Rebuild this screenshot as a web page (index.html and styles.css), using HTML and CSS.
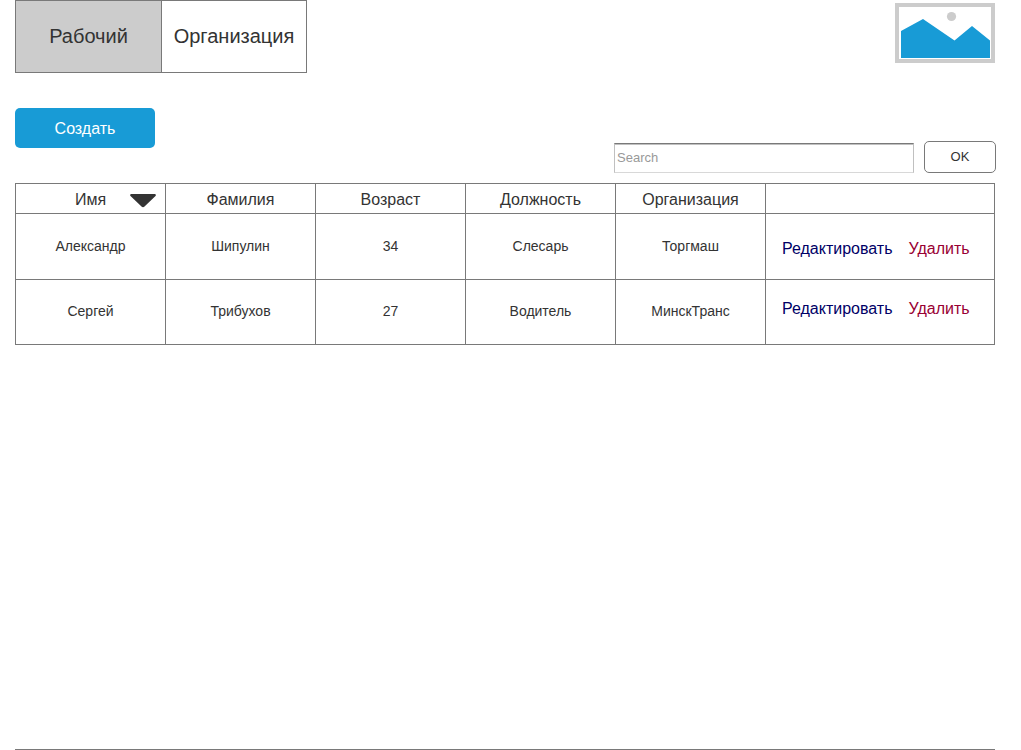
FILE: index.html
```html
<!DOCTYPE html>
<html lang="ru">
<head>
  <meta charset="utf-8">
  <meta name="viewport" content="width=device-width, initial-scale=1">
  <title>Рабочий</title>
  <link rel="stylesheet" href="styles.css">
</head>
<body class="page">
  <header class="header">
    <nav class="tabs">
      <a class="tab tab-active" href="#workers" aria-current="page">Рабочий</a>
      <a class="tab" href="#organizations">Организация</a>
    </nav>
    <svg class="logo" viewBox="0 0 100 60" role="img" aria-label="Логотип">
      <rect x="2" y="2" width="96" height="56" fill="#fff" stroke="#ccc" stroke-width="4"/>
      <circle cx="56.5" cy="13.5" r="4.6" fill="#ccc"/>
      <path d="M6 28 L28 16 L59.500 37.500 L77 23 L95 37.500 V55 H6 Z" fill="#189bd6"/>
    </svg>
  </header>

  <main class="content">
    <div class="toolbar">
      <button class="create" type="button">Создать</button>
      <form class="search" role="search">
        <input class="search-field" type="search" placeholder="Search" aria-label="Search">
        <button class="search-button" type="button">OK</button>
      </form>
    </div>

    <table class="grid">
      <colgroup>
        <col class="col-data"><col class="col-data"><col class="col-data"><col class="col-data"><col class="col-data"><col>
      </colgroup>
      <thead>
        <tr>
          <th class="sorted" scope="col" aria-sort="descending">Имя
            <svg class="sort-icon" viewBox="0 0 26 14" aria-hidden="true">
              <path d="M1 0 H25 Q26.500 0.500 25.500 2 L14.500 12.500 Q13 14 11.500 12.500 L0.500 2 Q-0.500 0.500 1 0 Z" fill="#333"/>
            </svg>
          </th>
          <th scope="col">Фамилия</th>
          <th scope="col">Возраст</th>
          <th scope="col">Должность</th>
          <th scope="col">Организация</th>
          <td></td>
        </tr>
      </thead>
      <tbody>
        <tr>
          <td>Александр</td>
          <td>Шипулин</td>
          <td>34</td>
          <td>Слесарь</td>
          <td>Торгмаш</td>
          <td>
            <div class="actions">
              <a class="edit" href="#edit-1">Редактировать</a>
              <a class="delete" href="#delete-1">Удалить</a>
            </div>
          </td>
        </tr>
        <tr class="last-row">
          <td>Сергей</td>
          <td>Трибухов</td>
          <td>27</td>
          <td>Водитель</td>
          <td>МинскТранс</td>
          <td>
            <div class="actions">
              <a class="edit" href="#edit-2">Редактировать</a>
              <a class="delete" href="#delete-2">Удалить</a>
            </div>
          </td>
        </tr>
      </tbody>
    </table>
  </main>

  <footer class="footer"></footer>
</body>
</html>
```

FILE: styles.css
```css
* {
  box-sizing: border-box;
}

.page {
  display: flex;
  flex-direction: column;
  min-height: 100vh;
  margin: 0;
  background: #fff;
  color: #333;
  font-family: "Liberation Sans", Arial, sans-serif;
  font-size: 14px;
}

.header {
  display: flex;
  justify-content: space-between;
  align-items: flex-start;
  padding: 0 26px 0 15px;
}

.tabs {
  display: flex;
  border: 1px solid #797979;
}

.tab {
  display: flex;
  align-items: center;
  justify-content: center;
  width: 144px;
  height: 71px;
  color: #333;
  font-size: 20px;
  text-decoration: none;
}

.tab-active {
  width: 146px;
  border-right: 1px solid #797979;
  background: #ccc;
}

.logo {
  width: 100px;
  height: 60px;
  margin-top: 3px;
}

.content {
  flex: 1;
  padding-top: 35px;
}

.toolbar {
  display: flex;
  justify-content: space-between;
  align-items: flex-start;
  padding: 0 25px 10px 15px;
}

.create {
  width: 140px;
  height: 40px;
  padding: 2px 0 0;
  border: 0;
  border-radius: 5px;
  background: #189bd6;
  color: #fff;
  font: inherit;
  font-size: 16px;
}

.search {
  display: flex;
  align-items: flex-end;
  gap: 10px;
  padding-top: 33px;
}

.search-field {
  width: 300px;
  height: 30px;
  padding: 0 2px 2px;
  border: 1px solid #c0c0c0;
  border-top-color: #797979;
  border-bottom-color: #d8d8d8;
  border-radius: 0;
  background: #fff;
  box-shadow: inset 0 1px #c0c0c0;
  color: #333;
  font: inherit;
  font-size: 13px;
  appearance: none;
}

.search-field::placeholder {
  color: #999;
}

.search-button {
  width: 72px;
  height: 32px;
  padding: 0 0 2px;
  border: 1px solid #797979;
  border-radius: 5px;
  background: #fff;
  color: #333;
  font: inherit;
  font-size: 13px;
}

.grid {
  width: calc(100% - 41px);
  margin: 0 26px 0 15px;
  border: solid #797979;
  border-width: 1px 0 0 1px;
  border-spacing: 0;
  table-layout: fixed;
}

.col-data {
  width: 150px;
}

.grid th,
.grid td {
  height: 66px;
  padding: 0 0 2px;
  border: solid #797979;
  border-width: 0 1px 1px 0;
  text-align: center;
}

.grid .last-row td {
  height: 65px;
}

.grid thead th,
.grid thead td {
  height: 30px;
  padding: 2px 0 0;
  font-size: 16px;
  font-weight: 400;
}

.grid .sorted {
  position: relative;
}

.sort-icon {
  position: absolute;
  top: 10px;
  right: 9px;
  width: 26px;
  height: 14px;
}

.actions {
  display: flex;
  gap: 16px;
  padding: 6px 0 0 16px;
  font-size: 16px;
}

.last-row .actions {
  padding: 0 0 4px 16px;
}

.edit,
.delete {
  color: #000066;
  text-decoration: none;
}

.delete {
  color: #990033;
}

.footer {
  margin: 0 26px 0 15px;
  border-top: 1px solid #797979;
}
```
